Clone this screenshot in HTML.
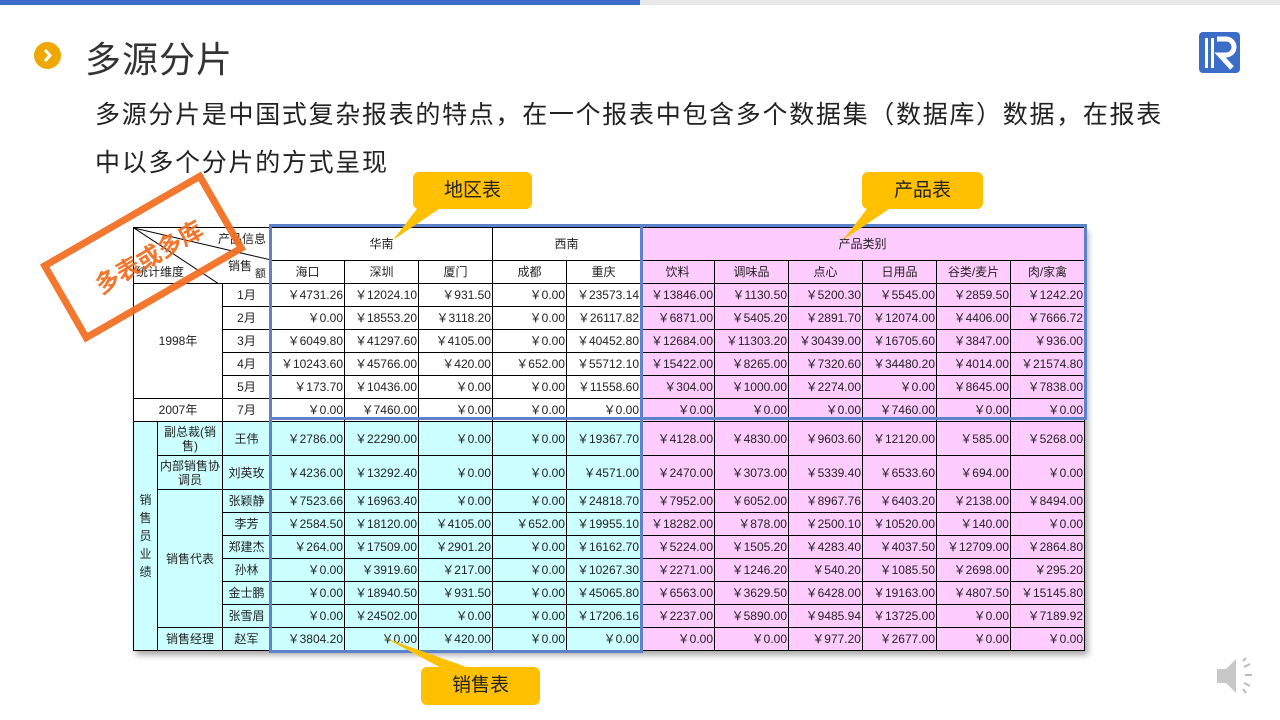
<!DOCTYPE html>
<html><head><meta charset="utf-8">
<style>
*{margin:0;padding:0;box-sizing:border-box}
body{width:1280px;height:720px;position:relative;background:#fff;overflow:hidden;font-family:"Liberation Sans","Noto Sans CJK SC",sans-serif;color:#222}
.bar1{position:absolute;left:0;top:0;width:640px;height:5px;background:#3b6cc8}
.bar2{position:absolute;left:640px;top:0;width:640px;height:5px;background:#e8e8e8}
.dot{position:absolute;left:34px;top:42px;width:27px;height:27px;border-radius:50%;background:#f0a800}
.title{position:absolute;left:85px;top:31px;font-size:36px;color:#333;letter-spacing:1px}
.para{position:absolute;left:95px;top:91px;width:1085px;font-size:25px;letter-spacing:1.7px;line-height:48px;color:#222}
table{position:absolute;left:133px;top:227px;border-collapse:collapse;table-layout:fixed;font-size:12px;box-shadow:3px 4px 6px rgba(0,0,0,.35)}
td{border:1px solid #000;height:23px;padding:0 1px;text-align:right;white-space:nowrap;overflow:hidden;line-height:12px}
td.c{text-align:center}
.p{background:#ffccff}
.y{background:#ccffff}
.w{background:#fff}
.box{position:absolute;border:3px solid #5d82c9}
.call{position:absolute;background:#ffc000;border-radius:6px;font-size:19px;color:#222;text-align:center;line-height:37px}
</style></head><body>
<div class="bar1"></div><div class="bar2"></div>
<div class="dot"><svg width="27" height="27"><path d="M11 8 L16 13.5 L11 19" stroke="#fff" stroke-width="3" fill="none"/></svg></div>
<div class="title">多源分片</div>
<svg style="position:absolute;left:1199px;top:32px" width="42" height="42"><rect x="0" y="0" width="41" height="41" rx="4" fill="#3a6cc8"/><rect x="6" y="6" width="3" height="30" fill="#fff"/><rect x="12" y="6" width="3" height="30" fill="#fff"/><path d="M18 7 H27 A8 8 0 0 1 27 23 H21 L33 36" stroke="#fff" stroke-width="5" fill="none"/></svg>
<div class="para">多源分片是中国式复杂报表的特点，在一个报表中包含多个数据集（数据库）数据，在报表<br>中以多个分片的方式呈现</div>

<table>
<colgroup><col style="width:24px"><col style="width:65px"><col style="width:48px"><col span="11" style="width:74px"></colgroup>
<tr style="height:32px"><td colspan="3" rowspan="2" class="w" style="position:relative;height:56px">
<svg style="position:absolute;left:0;top:0" width="137" height="56"><line x1="0" y1="0" x2="137" y2="32" stroke="#000"/><line x1="0" y1="0" x2="85" y2="56" stroke="#000"/></svg>
<span style="position:absolute;left:84px;top:5px">产品信息</span><span style="position:absolute;left:94px;top:32px">销售</span><span style="position:absolute;left:121px;top:40px;font-size:11px">额</span><span style="position:absolute;left:2px;top:38px">统计维度</span></td>
<td colspan="3" class="c w">华南</td><td colspan="2" class="c w">西南</td><td colspan="6" class="c p">产品类别</td></tr>
<tr><td class="c w">海口</td><td class="c w">深圳</td><td class="c w">厦门</td><td class="c w">成都</td><td class="c w">重庆</td><td class="c p">饮料</td><td class="c p">调味品</td><td class="c p">点心</td><td class="c p">日用品</td><td class="c p">谷类/麦片</td><td class="c p">肉/家禽</td></tr>
<tr><td colspan="2" rowspan="5" class="c w">1998年</td><td class="c w">1月</td><td class="w">￥4731.26</td><td class="w">￥12024.10</td><td class="w">￥931.50</td><td class="w">￥0.00</td><td class="w">￥23573.14</td><td class="p">￥13846.00</td><td class="p">￥1130.50</td><td class="p">￥5200.30</td><td class="p">￥5545.00</td><td class="p">￥2859.50</td><td class="p">￥1242.20</td></tr>
<tr><td class="c w">2月</td><td class="w">￥0.00</td><td class="w">￥18553.20</td><td class="w">￥3118.20</td><td class="w">￥0.00</td><td class="w">￥26117.82</td><td class="p">￥6871.00</td><td class="p">￥5405.20</td><td class="p">￥2891.70</td><td class="p">￥12074.00</td><td class="p">￥4406.00</td><td class="p">￥7666.72</td></tr>
<tr><td class="c w">3月</td><td class="w">￥6049.80</td><td class="w">￥41297.60</td><td class="w">￥4105.00</td><td class="w">￥0.00</td><td class="w">￥40452.80</td><td class="p">￥12684.00</td><td class="p">￥11303.20</td><td class="p">￥30439.00</td><td class="p">￥16705.60</td><td class="p">￥3847.00</td><td class="p">￥936.00</td></tr>
<tr><td class="c w">4月</td><td class="w">￥10243.60</td><td class="w">￥45766.00</td><td class="w">￥420.00</td><td class="w">￥652.00</td><td class="w">￥55712.10</td><td class="p">￥15422.00</td><td class="p">￥8265.00</td><td class="p">￥7320.60</td><td class="p">￥34480.20</td><td class="p">￥4014.00</td><td class="p">￥21574.80</td></tr>
<tr><td class="c w">5月</td><td class="w">￥173.70</td><td class="w">￥10436.00</td><td class="w">￥0.00</td><td class="w">￥0.00</td><td class="w">￥11558.60</td><td class="p">￥304.00</td><td class="p">￥1000.00</td><td class="p">￥2274.00</td><td class="p">￥0.00</td><td class="p">￥8645.00</td><td class="p">￥7838.00</td></tr>
<tr><td colspan="2" class="c w">2007年</td><td class="c w">7月</td><td class="w">￥0.00</td><td class="w">￥7460.00</td><td class="w">￥0.00</td><td class="w">￥0.00</td><td class="w">￥0.00</td><td class="p">￥0.00</td><td class="p">￥0.00</td><td class="p">￥0.00</td><td class="p">￥7460.00</td><td class="p">￥0.00</td><td class="p">￥0.00</td></tr>
<tr style="height:34px"><td rowspan="11" class="c y" style="white-space:normal;line-height:18px;padding:0 5px">销售员业绩</td><td class="c y" style="white-space:normal;line-height:14px">副总裁(销售)</td><td class="c y">王伟</td><td class="y">￥2786.00</td><td class="y">￥22290.00</td><td class="y">￥0.00</td><td class="y">￥0.00</td><td class="y">￥19367.70</td><td class="p">￥4128.00</td><td class="p">￥4830.00</td><td class="p">￥9603.60</td><td class="p">￥12120.00</td><td class="p">￥585.00</td><td class="p">￥5268.00</td></tr>
<tr style="height:34px"><td class="c y" style="white-space:normal;line-height:14px">内部销售协调员</td><td class="c y">刘英玫</td><td class="y">￥4236.00</td><td class="y">￥13292.40</td><td class="y">￥0.00</td><td class="y">￥0.00</td><td class="y">￥4571.00</td><td class="p">￥2470.00</td><td class="p">￥3073.00</td><td class="p">￥5339.40</td><td class="p">￥6533.60</td><td class="p">￥694.00</td><td class="p">￥0.00</td></tr>
<tr><td rowspan="6" class="c y">销售代表</td><td class="c y">张颖静</td><td class="y">￥7523.66</td><td class="y">￥16963.40</td><td class="y">￥0.00</td><td class="y">￥0.00</td><td class="y">￥24818.70</td><td class="p">￥7952.00</td><td class="p">￥6052.00</td><td class="p">￥8967.76</td><td class="p">￥6403.20</td><td class="p">￥2138.00</td><td class="p">￥8494.00</td></tr>
<tr><td class="c y">李芳</td><td class="y">￥2584.50</td><td class="y">￥18120.00</td><td class="y">￥4105.00</td><td class="y">￥652.00</td><td class="y">￥19955.10</td><td class="p">￥18282.00</td><td class="p">￥878.00</td><td class="p">￥2500.10</td><td class="p">￥10520.00</td><td class="p">￥140.00</td><td class="p">￥0.00</td></tr>
<tr><td class="c y">郑建杰</td><td class="y">￥264.00</td><td class="y">￥17509.00</td><td class="y">￥2901.20</td><td class="y">￥0.00</td><td class="y">￥16162.70</td><td class="p">￥5224.00</td><td class="p">￥1505.20</td><td class="p">￥4283.40</td><td class="p">￥4037.50</td><td class="p">￥12709.00</td><td class="p">￥2864.80</td></tr>
<tr><td class="c y">孙林</td><td class="y">￥0.00</td><td class="y">￥3919.60</td><td class="y">￥217.00</td><td class="y">￥0.00</td><td class="y">￥10267.30</td><td class="p">￥2271.00</td><td class="p">￥1246.20</td><td class="p">￥540.20</td><td class="p">￥1085.50</td><td class="p">￥2698.00</td><td class="p">￥295.20</td></tr>
<tr><td class="c y">金士鹏</td><td class="y">￥0.00</td><td class="y">￥18940.50</td><td class="y">￥931.50</td><td class="y">￥0.00</td><td class="y">￥45065.80</td><td class="p">￥6563.00</td><td class="p">￥3629.50</td><td class="p">￥6428.00</td><td class="p">￥19163.00</td><td class="p">￥4807.50</td><td class="p">￥15145.80</td></tr>
<tr><td class="c y">张雪眉</td><td class="y">￥0.00</td><td class="y">￥24502.00</td><td class="y">￥0.00</td><td class="y">￥0.00</td><td class="y">￥17206.16</td><td class="p">￥2237.00</td><td class="p">￥5890.00</td><td class="p">￥9485.94</td><td class="p">￥13725.00</td><td class="p">￥0.00</td><td class="p">￥7189.92</td></tr>
<tr><td class="c y">销售经理</td><td class="c y">赵军</td><td class="y">￥3804.20</td><td class="y">￥0.00</td><td class="y">￥420.00</td><td class="y">￥0.00</td><td class="y">￥0.00</td><td class="p">￥0.00</td><td class="p">￥0.00</td><td class="p">￥977.20</td><td class="p">￥2677.00</td><td class="p">￥0.00</td><td class="p">￥0.00</td></tr>
</table>

<div class="box" style="left:269px;top:224px;width:374px;height:196px"></div>
<div class="box" style="left:640px;top:224px;width:447px;height:196px"></div>
<div class="box" style="left:269px;top:417px;width:374px;height:236px"></div>

<svg style="position:absolute;left:0;top:0" width="1280" height="720">
<polygon points="420,205 445,205 393,240" fill="#ffc000"/>
<polygon points="870,205 895,205 843,240" fill="#ffc000"/>
<polygon points="445,670 475,670 385,638" fill="#ffc000"/>
</svg>
<div class="call" style="left:413px;top:172px;width:119px">地区表</div>
<div class="call" style="left:862px;top:172px;width:121px">产品表</div>
<div class="call" style="left:421px;top:667px;width:119px;height:38px">销售表</div>

<div style="position:absolute;left:50px;top:212px;width:186px;height:90px;border:7px solid #f26b1d;transform:rotate(-30deg);transform-origin:center;opacity:.92"></div>
<div style="position:absolute;left:88px;top:238px;font-size:24px;font-weight:bold;color:#f26b1d;transform:rotate(-30deg);opacity:.92">多表或多库</div>

<svg style="position:absolute;left:1214px;top:655px" width="45" height="45"><polygon points="3,14 12,14 22,4 22,38 12,28 3,28" fill="#c8c8c8"/><g stroke="#bbb" stroke-width="2"><line x1="29" y1="6" x2="32" y2="3"/><line x1="30" y1="12" x2="36" y2="9"/><line x1="31" y1="20" x2="38" y2="20"/><line x1="30" y1="28" x2="36" y2="31"/><line x1="29" y1="34" x2="32" y2="38"/></g></svg>
</body></html>
